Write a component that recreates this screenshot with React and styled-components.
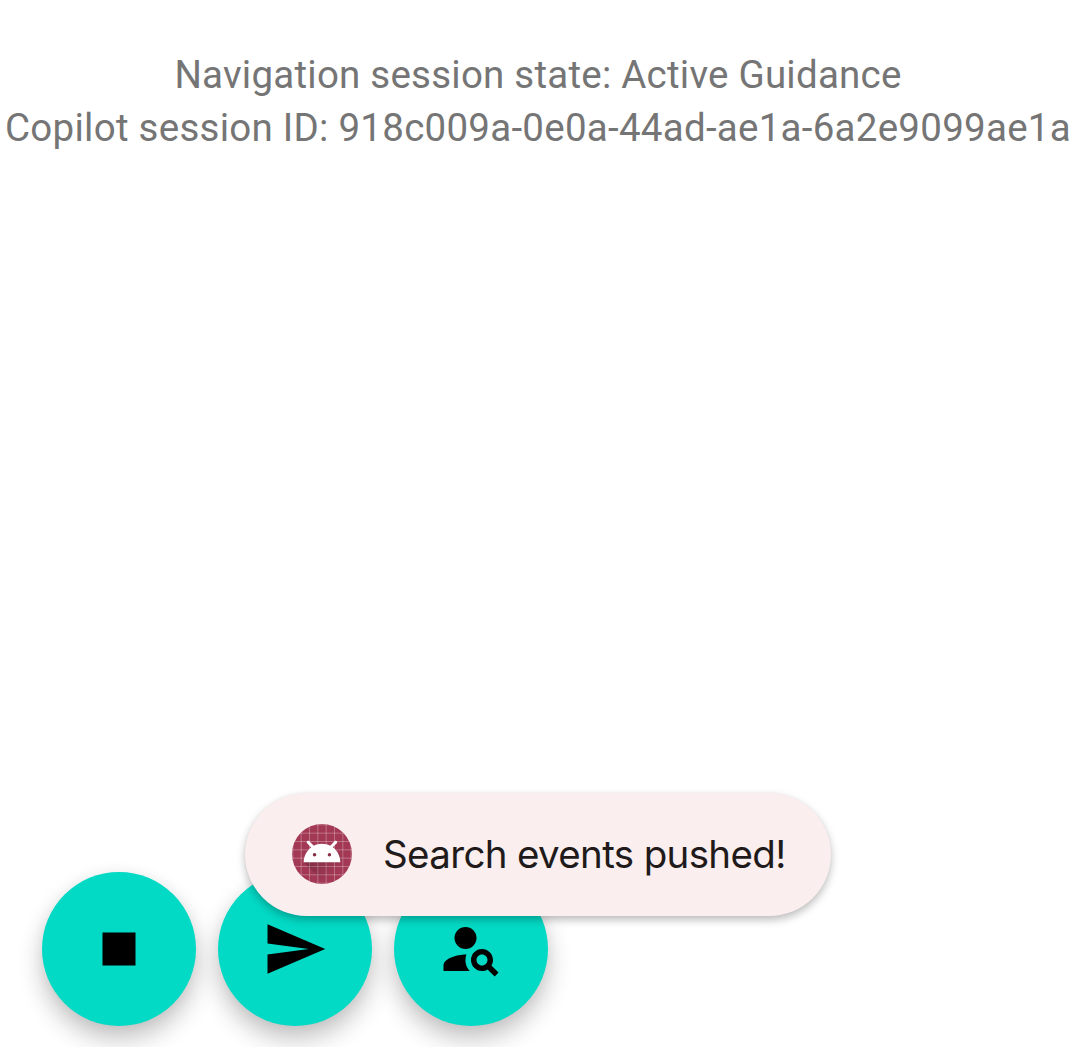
import React from "react";
import styled, { createGlobalStyle } from "styled-components";

const GlobalStyle = createGlobalStyle`
  * { box-sizing: border-box; }
  body { margin: 0; background: #fff; overflow: hidden; }
`;

const Screen = styled.main`
  position: relative;
  display: flex;
  flex-direction: column;
  justify-content: space-between;
  width: 1075px;
  height: 1047px;
  overflow: hidden;
  background: #fff;
`;

const Status = styled.header`
  display: flex;
  flex-direction: column;
  align-items: center;
  padding: 48px 0 0 1px;
`;

const StatusLine = styled.p`
  margin: 0;
  font: 400 38.5px/53px Roboto, sans-serif;
  letter-spacing: ${(p) => p.$tracking}px;
  color: #757575;
  white-space: nowrap;
`;

const Actions = styled.nav`
  display: flex;
  gap: 22px;
  padding: 0 42px 21px;
`;

const Fab = styled.button`
  display: flex;
  align-items: center;
  justify-content: center;
  width: 154px;
  height: 154px;
  padding: 0;
  border: 0;
  border-radius: 50%;
  background: #03dac5;
  color: #000;
  box-shadow: 0 13px 25px rgba(0, 0, 0, 0.24), 0 0 14px rgba(0, 0, 0, 0.04);
`;

const Glyph = styled.svg`
  display: block;
  width: 66px;
  height: 66px;
  fill: currentColor;
`;

const Toast = styled.div`
  position: absolute;
  left: 245px;
  top: 793px;
  display: flex;
  align-items: center;
  gap: 31px;
  width: 586px;
  height: 123px;
  padding: 0 0 1px 47px;
  border-radius: 62px;
  background: #faeeee;
  box-shadow: 0 4px 8px rgba(0, 0, 0, 0.26), 0 0 3px rgba(0, 0, 0, 0.04);
`;

const ToastText = styled.span`
  font: 400 38.5px/52px Inter, sans-serif;
  letter-spacing: -0.65px;
  color: #201a1b;
  white-space: nowrap;
`;

const AppBadge = styled.svg`
  display: block;
  flex: none;
  width: 60px;
  height: 60px;
`;

const gridLines = [19, 29, 39, 49, 59, 69, 79, 89];

function AndroidBadge() {
  return (
    <AppBadge viewBox="18 18 72 72" aria-hidden="true">
      <defs>
        <clipPath id="badge"><circle cx="54" cy="54" r="36" /></clipPath>
        <linearGradient id="shade" gradientUnits="userSpaceOnUse" x1="48.77" y1="61.09" x2="78.59" y2="90.92">
          <stop offset="0" stopColor="#000" stopOpacity="0.17" />
          <stop offset="0.6" stopColor="#000" stopOpacity="0" />
        </linearGradient>
      </defs>
      <g clipPath="url(#badge)">
        <rect x="18" y="18" width="72" height="72" fill="#a33855" />
        {gridLines.map((n) => (
          <path key={n} d={`M${n} 18V90M18 ${n}H90`} stroke="#fff" strokeOpacity="0.35" strokeWidth="1" />
        ))}
        <path fill="url(#shade)" d="M32,64C32,64 38.39,52.99 44.13,50.95C51.37,48.37 70.14,49.57 70.14,49.57L108.26,87.69L108,109.01L75.97,107.97L32,64Z" />
        <path fill="#fff" fillRule="evenodd" d="M66.94,46.02C72.44,50.07 76,56.61 76,64L32,64C32,56.61 35.56,50.11 40.98,46.06L36.18,41.19C35.45,40.45 35.45,39.3 36.18,38.56C36.91,37.81 38.05,37.81 38.78,38.56L44.25,44.05C47.18,42.57 50.48,41.71 54,41.71C57.48,41.71 60.78,42.57 63.68,44.05L69.11,38.56C69.84,37.81 70.98,37.81 71.71,38.56C72.44,39.3 72.44,40.45 71.71,41.19L66.94,46.02ZM62.94,56.92C64.08,56.92 65,56.01 65,54.88C65,53.76 64.08,52.85 62.94,52.85C61.8,52.85 60.88,53.76 60.88,54.88C60.88,56.01 61.8,56.92 62.94,56.92ZM45.06,56.92C46.2,56.92 47.13,56.01 47.13,54.88C47.13,53.76 46.2,52.85 45.06,52.85C43.92,52.85 43,53.76 43,54.88C43,56.01 43.92,56.92 45.06,56.92Z" />
      </g>
    </AppBadge>
  );
}

export default function App() {
  return (
    <Screen>
      <GlobalStyle />
      <Status>
        <StatusLine $tracking={0.23}>Navigation session state: Active Guidance</StatusLine>
        <StatusLine $tracking={0.26}>Copilot session ID: 918c009a-0e0a-44ad-ae1a-6a2e9099ae1a</StatusLine>
      </Status>
      <Actions>
        <Fab aria-label="Stop">
          <Glyph viewBox="0 0 24 24"><path d="M6 6h12v12H6z" /></Glyph>
        </Fab>
        <Fab aria-label="Send">
          <Glyph viewBox="0 0 24 24"><path d="M2.01 21L23 12 2.01 3 2 10l15 2-15 2z" /></Glyph>
        </Fab>
        <Fab aria-label="Search person">
          <Glyph viewBox="0 0 24 24">
            <circle cx="10" cy="8" r="4" />
            <path d="M10.35 14.01C7.62 13.91 2 15.27 2 18v2h9.54c-2.47-2.76-1.23-5.89-1.19-5.99z" />
            <path d="M19.43 18.02c.36-.59.57-1.28.57-2.02 0-2.21-1.79-4-4-4s-4 1.79-4 4 1.79 4 4 4c.74 0 1.43-.22 2.02-.57L20.59 22 22 20.59l-2.57-2.57zM16 18c-1.1 0-2-.9-2-2s.9-2 2-2 2 .9 2 2-.9 2-2 2z" />
          </Glyph>
        </Fab>
      </Actions>
      <Toast role="status">
        <AndroidBadge />
        <ToastText>Search events pushed!</ToastText>
      </Toast>
    </Screen>
  );
}
